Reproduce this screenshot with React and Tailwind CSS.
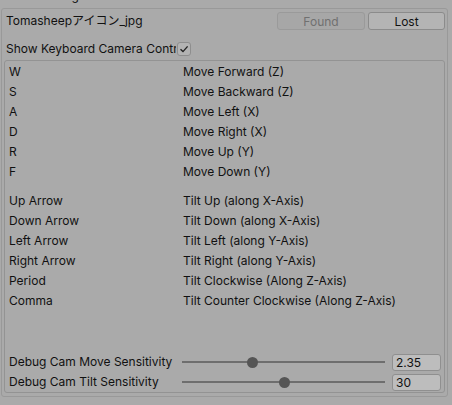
import React from 'react';

const moveKeys = [
  ['W', 'Move Forward (Z)'],
  ['S', 'Move Backward (Z)'],
  ['A', 'Move Left (X)'],
  ['D', 'Move Right (X)'],
  ['R', 'Move Up (Y)'],
  ['F', 'Move Down (Y)'],
];

const tiltKeys = [
  ['Up Arrow', 'Tilt Up (along X-Axis)'],
  ['Down Arrow', 'Tilt Down (along X-Axis)'],
  ['Left Arrow', 'Tilt Left (along Y-Axis)'],
  ['Right Arrow', 'Tilt Right (along Y-Axis)'],
  ['Period', 'Tilt Clockwise (Along Z-Axis)'],
  ['Comma', 'Tilt Counter Clockwise (Along Z-Axis)'],
];

const KeyRow = ({ keyName, action }) => (
  <div className="flex items-center h-[20px]">
    <span className="w-[178px] pl-[4px]">{keyName}</span>
    <span>{action}</span>
  </div>
);

const SliderRow = ({ label, thumb, value }) => (
  <div className="flex items-center h-[20px]">
    <span className="w-[177px] pl-[4px] whitespace-nowrap">{label}</span>
    <div className="relative w-[203px] h-[11px] flex items-center">
      <div className="w-full h-[2px] bg-[#6e6e6e]" />
      <div
        className="absolute top-0 w-[11px] h-[11px] rounded-full bg-[#555555]"
        style={{ left: thumb }}
      />
    </div>
    <div className="ml-[7px] w-[49px] h-[17px] bg-[#bdbdbd] border border-[#8f8f8f] rounded-[3px] pl-[3px] leading-[15px]">
      {value}
    </div>
  </div>
);

export default function App() {
  return (
    <div
      className="w-[452px] h-[405px] overflow-hidden bg-[#aaaaaa] text-[12px] text-[#111111]"
      style={{ fontFamily: 'Inter, "Noto Sans CJK JP", sans-serif' }}
    >
      <div className="h-[16px] -mt-[12px] pl-[5px] leading-[16px]">Editor Debug Mode</div>

      <div className="mt-[4px] ml-[1px] w-[447px] h-[389px] border border-[#999999] rounded-[3px] flex flex-col">
        <div className="flex items-center h-[18px] mt-[3px] pl-[4px] pr-[2px]">
          <span className="flex-1">Tomasheepアイコン_jpg</span>
          <button className="w-[88px] h-[18px] bg-[#a7a7a7] border border-[#9a9a9a] rounded-[3px] text-[#707070]">
            Found
          </button>
          <button className="ml-[3px] w-[77px] h-[18px] bg-[#b4b4b4] border border-[#8b8b8b] rounded-[3px]">
            Lost
          </button>
        </div>

        <div className="flex items-center h-[14px] mt-[12px] pl-[4px]">
          <span className="w-[170px] overflow-hidden whitespace-nowrap">Show Keyboard Camera Controls</span>
          <span className="ml-[1px] w-[14px] h-[14px] bg-[#b3b3b3] border border-[#8e8e8e] rounded-[3px] flex items-center justify-center">
            <svg width="10" height="10" viewBox="0 0 10 10" fill="none">
              <path d="M1.5 5.2 L4 7.6 L8.6 2.4" stroke="#222" strokeWidth="1.4" />
            </svg>
          </span>
        </div>

        <div className="mt-[4px] ml-[2px] mr-[2px] h-[333px] border border-[#939393] rounded-[3px] flex flex-col pt-[1px]">
          {moveKeys.map(([k, a]) => (
            <KeyRow key={k} keyName={k} action={a} />
          ))}
          <div className="h-[9px]" />
          {tiltKeys.map(([k, a]) => (
            <KeyRow key={k} keyName={k} action={a} />
          ))}
          <div className="flex-1" />
          <SliderRow label="Debug Cam Move Sensitivity" thumb={65} value="2.35" />
          <SliderRow label="Debug Cam Tilt Sensitivity" thumb={97} value="30" />
        </div>
      </div>
    </div>
  );
}
